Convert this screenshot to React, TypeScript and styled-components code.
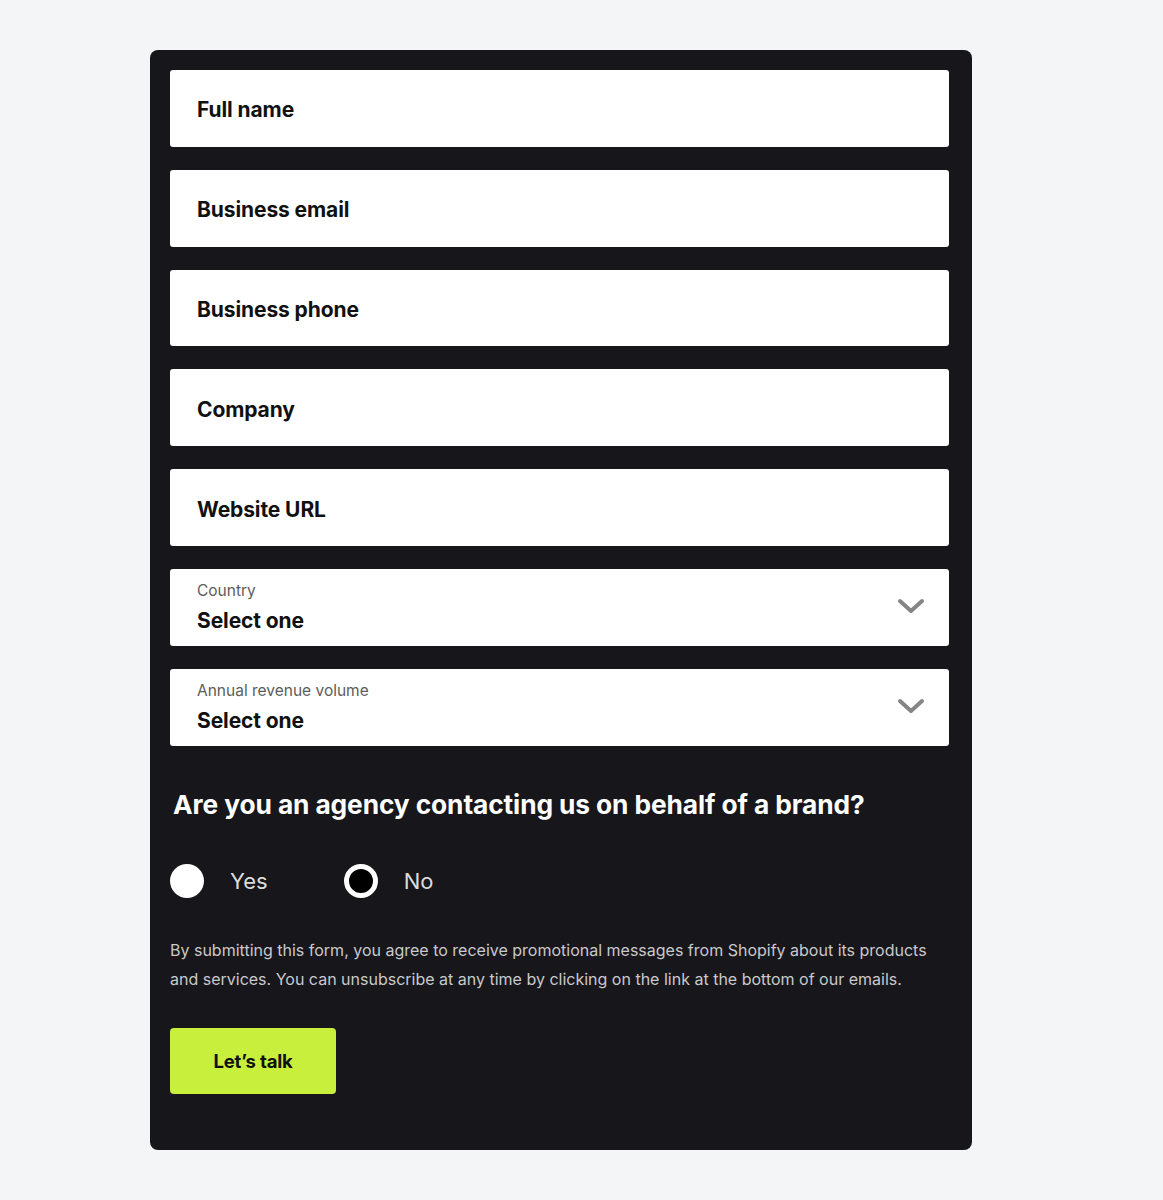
import styled, { createGlobalStyle } from "styled-components";

const GlobalStyle = createGlobalStyle`
  html, body {
    margin: 0;
    padding: 0;
    background: #f4f5f7;
  }
  body {
    font-family: "Inter", "Noto Sans", sans-serif;
    -webkit-font-smoothing: antialiased;
  }
`;

const Page = styled.div`
  min-height: 1200px;
  padding: 50px 0 0 150px;
  box-sizing: border-box;
`;

const Card = styled.form`
  width: 822px;
  height: 1100px;
  box-sizing: border-box;
  background: #17161b;
  border-radius: 8px;
  padding: 20px 23px 0 20px;
  display: flex;
  flex-direction: column;
`;

const Fields = styled.div`
  display: flex;
  flex-direction: column;
  gap: 23px;
`;

const Field = styled.div`
  height: 76.8px;
  background: #fff;
  border-radius: 3px;
  padding: 3px 27px 0;
  display: flex;
  align-items: center;
  box-sizing: border-box;
`;

const Placeholder = styled.span`
  font-size: 21px;
  font-weight: 700;
  color: #111;
  letter-spacing: -0.1px;
`;

const SelectField = styled(Field)`
  justify-content: space-between;
  padding: 0 24px 0 27px;
`;

const SelectText = styled.div`
  display: flex;
  flex-direction: column;
  gap: 8px;
  padding-top: 1px;
`;

const SelectLabel = styled.span`
  font-size: 15.5px;
  color: #5c5c5c;
  line-height: 18px;
`;

const SelectValue = styled.span`
  font-size: 21px;
  font-weight: 700;
  color: #111;
  line-height: 25px;
  letter-spacing: -0.1px;
`;

const Question = styled.h2`
  margin: 42px 0 0 3px;
  font-size: 26.3px;
  font-weight: 700;
  color: #fff;
  letter-spacing: -0.1px;
  line-height: 34px;
`;

const RadioRow = styled.div`
  display: flex;
  align-items: center;
  gap: 76px;
  margin-top: 42px;
`;

const RadioOption = styled.label`
  display: flex;
  align-items: center;
  gap: 26px;
  font-size: 22px;
  color: #dcdcdc;
`;

const RadioDot = styled.span<{ $checked?: boolean }>`
  width: 34px;
  height: 34px;
  border-radius: 50%;
  box-sizing: border-box;
  background: ${(p) => (p.$checked ? "#000" : "#fff")};
  border: ${(p) => (p.$checked ? "5px solid #fff" : "none")};
`;

const Disclaimer = styled.p`
  margin: 38px 0 0;
  font-size: 16px;
  line-height: 29px;
  color: #c9c9cc;
  letter-spacing: 0;
  white-space: nowrap;
`;

const Submit = styled.button`
  margin-top: 34px;
  width: 166px;
  height: 66px;
  border: none;
  border-radius: 4px;
  background: #c8ef3c;
  color: #111;
  font-family: inherit;
  font-size: 18.5px;
  font-weight: 700;
  letter-spacing: -0.2px;
  cursor: pointer;
`;

const Chevron = () => (
  <svg width="28" height="18" viewBox="0 0 28 18" fill="none">
    <path d="M3 3l11 10L25 3" stroke="#858585" strokeWidth="4" strokeLinecap="round" strokeLinejoin="round" />
  </svg>
);

const inputs = ["Full name", "Business email", "Business phone", "Company", "Website URL"];
const selects = ["Country", "Annual revenue volume"];

export default function App() {
  return (
    <>
      <GlobalStyle />
      <Page>
        <Card onSubmit={(e) => e.preventDefault()}>
          <Fields>
            {inputs.map((label) => (
              <Field key={label}>
                <Placeholder>{label}</Placeholder>
              </Field>
            ))}
            {selects.map((label) => (
              <SelectField key={label}>
                <SelectText>
                  <SelectLabel>{label}</SelectLabel>
                  <SelectValue>Select one</SelectValue>
                </SelectText>
                <Chevron />
              </SelectField>
            ))}
          </Fields>
          <Question>Are you an agency contacting us on behalf of a brand?</Question>
          <RadioRow>
            <RadioOption>
              <RadioDot />
              Yes
            </RadioOption>
            <RadioOption>
              <RadioDot $checked />
              No
            </RadioOption>
          </RadioRow>
          <Disclaimer>
            By submitting this form, you agree to receive promotional messages from Shopify about its products
            <br />
            and services. You can unsubscribe at any time by clicking on the link at the bottom of our emails.
          </Disclaimer>
          <div>
            <Submit type="submit">Let’s talk</Submit>
          </div>
        </Card>
      </Page>
    </>
  );
}
